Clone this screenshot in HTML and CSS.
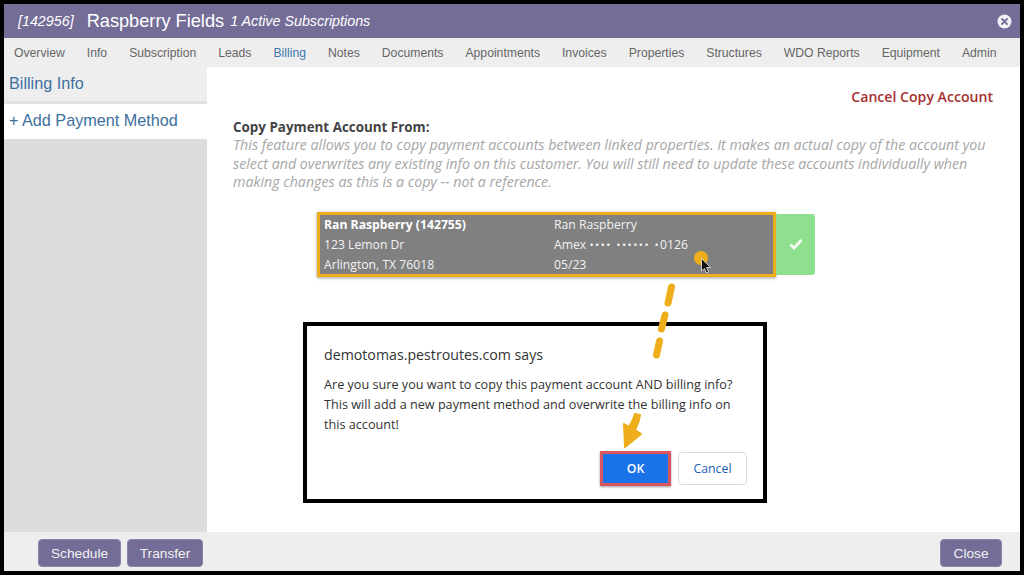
FILE: index.html
```html
<!DOCTYPE html>
<html lang="en">
<head>
<meta charset="utf-8">
<title>Raspberry Fields</title>
<link rel="stylesheet" href="styles.css">
</head>
<body>
<div class="frame">
  <header class="title-bar">
    <span class="cust-id">[142956]</span>
    <span class="cust-name">Raspberry Fields</span>
    <span class="subs">1 Active Subscriptions</span>
    <svg class="close-x" width="15" height="15" viewBox="0 0 15 15"><circle cx="7.5" cy="7.5" r="7" fill="#f1f0f5"/><path d="M5 5l5 5M10 5l-5 5" stroke="#736d97" stroke-width="1.8" stroke-linecap="round"/></svg>
  </header>
  <nav class="tabs">
    <span>Overview</span><span>Info</span><span>Subscription</span><span>Leads</span><span class="active">Billing</span><span>Notes</span><span>Documents</span><span>Appointments</span><span>Invoices</span><span>Properties</span><span>Structures</span><span>WDO Reports</span><span>Equipment</span><span>Admin</span>
  </nav>
  <div class="body">
    <aside class="side">
      <div class="side-head">Billing Info</div>
      <div class="side-add">+ Add Payment Method</div>
    </aside>
    <main class="content">
      <div class="cancel-row"><span class="cancel">Cancel Copy Account</span></div>
      <h4 class="copy-title">Copy Payment Account From:</h4>
      <p class="copy-desc">This feature allows you to copy payment accounts between linked properties. It makes an actual copy of the account you select and overwrites any existing info on this customer. You will still need to update these accounts individually when making changes as this is a copy -- not a reference.</p>
      <div class="account-row">
        <div class="account">
          <div class="acc-col acc-left">
            <strong>Ran Raspberry (142755)</strong>
            <span>123 Lemon Dr</span>
            <span>Arlington, TX 76018</span>
          </div>
          <div class="acc-col">
            <span>Ran Raspberry</span>
            <span>Amex <span class="dots">•••• •••••• •</span>0126</span>
            <span>05/23</span>
          </div>
        </div>
        <div class="select-btn">
          <svg width="14" height="12" viewBox="0 0 14 12"><path d="M1.5 6.500l3.500 3.500 7.500-8" fill="none" stroke="#f4fbf4" stroke-width="2.800"/></svg>
        </div>
      </div>
    </main>
  </div>
  <footer class="foot">
    <div class="foot-left"><button class="btn btn-schedule">Schedule</button><button class="btn btn-transfer">Transfer</button></div>
    <button class="btn btn-close">Close</button>
  </footer>
</div>

<div class="dialog">
  <div class="dlg-title">demotomas.pestroutes.com says</div>
  <p class="dlg-msg">Are you sure you want to copy this payment account AND billing info? This will add a new payment method and overwrite the billing info on this account!</p>
  <div class="dlg-actions">
    <button class="dlg-ok">OK</button>
    <button class="dlg-cancel">Cancel</button>
  </div>
</div>

<svg class="annot" width="1024" height="575" viewBox="0 0 1024 575">
  <path d="M671.500 287l-3.500 16" stroke="#eeae1c" stroke-width="7" stroke-linecap="round" fill="none"/>
  <path d="M665 315l-3.500 14" stroke="#eeae1c" stroke-width="7" stroke-linecap="round" fill="none"/>
  <path d="M659.500 341l-3 14" stroke="#eeae1c" stroke-width="7" stroke-linecap="round" fill="none"/>
  <path d="M640 415q-1 7-5 15l6 4-16 13-1-23 5 3q4-6 6-13z" fill="#eeae1c" stroke="#eeae1c" stroke-width="2" stroke-linejoin="round"/>
  <circle cx="701" cy="258" r="7" fill="#eeae1c"/>
  <path d="M701.500 258.500v12.500l3-2.500 2 4.500 2-1-2-4.500h4z" fill="#111" stroke="#fff" stroke-width=".7"/>
</svg>
</body>
</html>
```
FILE: styles.css
```css
* { box-sizing: border-box; }
html, body { margin: 0; height: 100%; background: #000; overflow: hidden; }
body { position: relative; width: 1024px; height: 575px; padding: 4px; font-family: "Liberation Sans", Arial, sans-serif; }
.frame { width: 1016px; height: 567px; display: flex; flex-direction: column; background: #fff; }

.title-bar { height: 34px; flex: none; background: #736d97; color: #fff; display: flex; align-items: center; padding-left: 14px; padding-right: 8px; }
.cust-id { font-style: italic; font-size: 14.3px; margin-right: 13px; }
.cust-name { font-size: 18.2px; margin-right: 6px; }
.subs { font-style: italic; font-size: 14.3px; }
.close-x { margin-left: auto; }

.tabs { height: 29px; flex: none; background: #eee; display: flex; align-items: center; padding-left: 10px; gap: 22px; font-size: 12.2px; color: #666; white-space: nowrap; }
.tabs .active { color: #3d78ad; }

.body { flex: 1; display: flex; min-height: 0; }
.side { width: 203px; flex: none; background: #ddd; }
.side-head { height: 37px; background: #eee; color: #3d6f9e; font-size: 16.2px; padding: 7px 0 0 5px; border-bottom: 3px solid #e2e2e2; }
.side-add { height: 35px; background: #fff; color: #3d6f9e; font-size: 16.2px; padding: 7px 0 0 5px; }

.content { flex: 1; padding: 0 27px 0 26px; font-family: "Open Sans", sans-serif; }
.cancel-row { display: flex; justify-content: flex-end; padding-top: 20px; height: 52px; }
.cancel { color: #a5312f; font-size: 14.1px; font-weight: 600; line-height: 19px; }
.copy-title { margin: 0; color: #444; font-size: 13.4px; font-weight: 700; line-height: 17px; }
.copy-desc { margin: 0; color: #a6a6a6; font-size: 14.22px; font-style: italic; line-height: 18.5px; width: 760px; }
.account-row { display: flex; align-items: center; margin: 20px 0 0 84px; }
.account { width: 459px; height: 65px; background: #808080; border: 3px solid #eeae1c; box-shadow: 0 1px 3px rgba(0,0,0,.4); color: #f2f2f2; display: flex; font-size: 12.2px; line-height: 20px; padding: 0 4px; }
.acc-col { display: flex; flex-direction: column; white-space: nowrap; }
.acc-left { width: 230px; }
.acc-left strong { font-weight: 700; color: #fff; }
.dots { letter-spacing: 1.5px; font-size: 11px; }
.select-btn { width: 39px; height: 61px; background: #8ee08e; border-radius: 0 3px 3px 0; display: flex; align-items: center; justify-content: center; }

.foot { height: 39px; flex: none; background: #eee; display: flex; align-items: center; justify-content: space-between; padding: 0 18px 0 34px; }
.foot-left { display: flex; gap: 6px; }
.btn { height: 28px; background: #736d97; color: #f2f2f2; border: 1px solid #8a85a8; border-radius: 4px; font: 13.7px "Liberation Sans", Arial, sans-serif; padding: 0; margin-top: 3px; }
.btn-schedule { width: 83px; }
.btn-transfer { width: 76px; }
.btn-close { width: 62px; }

.dialog { position: absolute; left: 303px; top: 322px; width: 464px; height: 181px; background: #fff; border: 4px solid #000; padding: 19px 17px 0; font-family: "Open Sans", sans-serif; color: #333; }
.dlg-title { font-size: 14.2px; line-height: 19px; }
.dlg-msg { margin: 10px 0 0; font-size: 12.65px; line-height: 20px; width: 418px; }
.dlg-actions { display: flex; justify-content: flex-end; gap: 7px; margin-top: 17px; margin-right: -1px; }
.dlg-ok { width: 71px; height: 35px; background: #1a73e8; color: #fff; border: 3px solid #d9565e; font: 600 12.3px "Open Sans", sans-serif; box-shadow: 0 1px 2px rgba(0,0,0,.4); }
.dlg-cancel { width: 69px; height: 33px; background: #fff; color: #1a5fb4; border: 1px solid #dadce0; border-radius: 4px; font: 12.3px "Open Sans", sans-serif; margin-top: 1px; }

.annot { position: absolute; left: 0; top: 0; pointer-events: none; }
```
